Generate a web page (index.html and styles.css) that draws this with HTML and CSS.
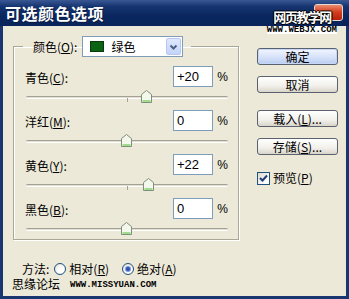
FILE: index.html
```html
<!DOCTYPE html>
<html lang="zh-CN">
<head>
    <meta charset="UTF-8">
    <title>可选颜色选项</title>
    <link rel="stylesheet" href="styles.css">
</head>
<body>
<div class="window">
    <div class="titlebar">
        <span class="title">可选颜色选项</span>
        <span class="close-btn"></span>
    </div>
    <div class="watermark">
        <span class="wm-cn">网页教学网</span>
        <span class="wm-url">WWW.WEBJX.COM</span>
    </div>

    <div class="dialog-body">
        <div class="left-col">
            <fieldset class="group">
                <legend class="group-legend">
                    <span class="legend-label">颜色(<u>O</u>):</span>
                    <div class="select">
                        <span class="swatch"></span>
                        <span class="select-text">绿色</span>
                        <span class="select-arrow">
                            <svg width="13" height="17" viewBox="0 0 13 17"><path d="M3.5 6.5 L6.5 9.5 L9.5 6.5" fill="none" stroke="#4d6185" stroke-width="2"/></svg>
                        </span>
                    </div>
                </legend>

                <div class="slider-row">
                    <div class="field-line">
                        <span class="field-label">青色(<u>C</u>):</span>
                        <input class="field-input" type="text" value="+20" readonly>
                        <span class="pct">%</span>
                    </div>
                    <div class="slider">
                        <span class="track"></span>
                        <span class="tick"></span>
                        <span class="thumb" style="left: 116px;">
                            <svg width="11" height="13" viewBox="0 0 11 13"><path d="M0.5 4.5 L5.5 0.5 L10.5 4.5 V12.5 H0.5 Z" fill="#f3f7ec" stroke="#7f8f7b"/><path d="M1.5 11.5 H9.5 M1.5 10.5 H9.5" stroke="#9fdc8c"/></svg>
                        </span>
                    </div>
                </div>

                <div class="slider-row">
                    <div class="field-line">
                        <span class="field-label">洋红(<u>M</u>):</span>
                        <input class="field-input" type="text" value="0" readonly>
                        <span class="pct">%</span>
                    </div>
                    <div class="slider">
                        <span class="track"></span>
                        <span class="tick"></span>
                        <span class="thumb" style="left: 96px;">
                            <svg width="11" height="13" viewBox="0 0 11 13"><path d="M0.5 4.5 L5.5 0.5 L10.5 4.5 V12.5 H0.5 Z" fill="#f3f7ec" stroke="#7f8f7b"/><path d="M1.5 11.5 H9.5 M1.5 10.5 H9.5" stroke="#9fdc8c"/></svg>
                        </span>
                    </div>
                </div>

                <div class="slider-row">
                    <div class="field-line">
                        <span class="field-label">黄色(<u>Y</u>):</span>
                        <input class="field-input" type="text" value="+22" readonly>
                        <span class="pct">%</span>
                    </div>
                    <div class="slider">
                        <span class="track"></span>
                        <span class="tick"></span>
                        <span class="thumb" style="left: 118px;">
                            <svg width="11" height="13" viewBox="0 0 11 13"><path d="M0.5 4.5 L5.5 0.5 L10.5 4.5 V12.5 H0.5 Z" fill="#f3f7ec" stroke="#7f8f7b"/><path d="M1.5 11.5 H9.5 M1.5 10.5 H9.5" stroke="#9fdc8c"/></svg>
                        </span>
                    </div>
                </div>

                <div class="slider-row">
                    <div class="field-line">
                        <span class="field-label">黑色(<u>B</u>):</span>
                        <input class="field-input" type="text" value="0" readonly>
                        <span class="pct">%</span>
                    </div>
                    <div class="slider">
                        <span class="track"></span>
                        <span class="tick"></span>
                        <span class="thumb" style="left: 96px;">
                            <svg width="11" height="13" viewBox="0 0 11 13"><path d="M0.5 4.5 L5.5 0.5 L10.5 4.5 V12.5 H0.5 Z" fill="#f3f7ec" stroke="#7f8f7b"/><path d="M1.5 11.5 H9.5 M1.5 10.5 H9.5" stroke="#9fdc8c"/></svg>
                        </span>
                    </div>
                </div>
            </fieldset>

            <div class="method">
                <span class="method-label">方法:</span>
                <span class="radio"></span>
                <span class="radio-text">相对(<u>R</u>)</span>
                <span class="radio checked"></span>
                <span class="radio-text">绝对(<u>A</u>)</span>
            </div>

            <div class="footer">
                <span class="footer-cn">思缘论坛</span>
                <span class="footer-url">WWW.MISSYUAN.COM</span>
            </div>
        </div>

        <div class="right-col">
            <button class="btn btn-default">确定</button>
            <button class="btn btn-cancel">取消</button>
            <button class="btn btn-load">载入(<u>L</u>)...</button>
            <button class="btn btn-save">存储(<u>S</u>)...</button>
            <div class="preview">
                <span class="checkbox">
                    <svg width="11" height="11" viewBox="0 0 11 11"><path d="M2 5 L4.5 7.5 L9 2.5" fill="none" stroke="#22397a" stroke-width="2"/></svg>
                </span>
                <span class="preview-text">预览(<u>P</u>)</span>
            </div>
        </div>
    </div>
</div>
</body>
</html>
```

FILE: styles.css
```css
/* 可选颜色选项 dialog */
* {
    box-sizing: border-box;
}

body {
    margin: 0;
    font-family: "Noto Sans CJK SC", sans-serif;
    font-size: 12px;
    line-height: 14px;
    color: #000;
}

.window {
    position: relative;
    width: 349px;
    height: 299px;
    background: #ece9d8;
    overflow: hidden;
}

.titlebar {
    position: relative;
    height: 26px;
    padding-left: 5px;
    display: flex;
    align-items: center;
    background: linear-gradient(to bottom, #3a5994 0%, #16346f 25%, #0a2760 60%, #08245a 100%);
}

.title {
    color: #fff;
    font-size: 16px;
    line-height: 18px;
    font-weight: bold;
    letter-spacing: 0.5px;
    text-shadow: 1px 1px 0 #0a1a40;
}

.close-btn {
    position: absolute;
    right: 6px;
    top: 4px;
    width: 29px;
    height: 17px;
    border: 1px solid #e8d8d0;
    border-radius: 3px;
    background: linear-gradient(to bottom, #ec8c70 0%, #d44020 45%, #b8200c 100%);
}

.watermark {
    position: absolute;
    right: 12px;
    top: 8px;
    display: flex;
    flex-direction: column;
    align-items: center;
}

.wm-cn {
    color: #fff;
    font-size: 13px;
    line-height: 18px;
    font-weight: bold;
    letter-spacing: -1.5px;
    text-shadow: 1px 0 0 #000, -1px 0 0 #000, 0 1px 0 #000, 0 -1px 0 #000;
}

.wm-url {
    font-family: "Liberation Mono", monospace;
    font-size: 9px;
    line-height: 8px;
    font-weight: bold;
    color: #000;
    background: #fff;
}

.dialog-body {
    display: flex;
    height: 273px;
    padding-top: 10px;
    border: 3px solid #1a3670;
    border-top: 0;
}

.left-col {
    width: 242px;
    padding-left: 10px;
}

.group {
    width: 226px;
    min-width: 0;
    margin: 0;
    padding: 9px 10px 3px 11px;
    border: 1px solid #a9a797;
    box-shadow: inset 1px 1px 0 #fff, 1px 1px 0 #fff;
}

.group-legend {
    display: flex;
    align-items: center;
    gap: 5px;
    margin-left: -2px;
    padding: 0 8px 0 10px;
}

.select {
    display: flex;
    align-items: center;
    width: 101px;
    height: 21px;
    padding: 1px 1px 1px 7px;
    border: 1px solid #7f9db9;
    background: #fff;
}

.swatch {
    width: 14px;
    height: 11px;
    background: #0a6414;
    border: 1px solid #0a3a0a;
}

.select-text {
    margin-left: 7px;
    flex: 1;
}

.select-arrow {
    display: flex;
    width: 15px;
    height: 17px;
    border: 1px solid #b6c8f2;
    border-radius: 2px;
    background: linear-gradient(to bottom, #dfe8fd 0%, #c3d3fa 100%);
}

.slider-row {
    margin-bottom: 6px;
}

.slider-row:last-child {
    margin-bottom: 0;
}

.field-line {
    display: flex;
    align-items: center;
    height: 21px;
}

.field-label {
    flex: 1;
    padding-top: 2px;
}

.field-input {
    width: 40px;
    height: 21px;
    margin: 0;
    padding: 0 3px;
    border: 1px solid #7f9db9;
    background: #fff;
    font-family: "Liberation Sans", sans-serif;
    font-size: 13px;
    color: #000;
}

.pct {
    width: 15px;
    text-align: right;
    font-family: "Liberation Sans", sans-serif;
    font-size: 12px;
}

.slider {
    position: relative;
    height: 14px;
    margin-top: 3px;
}

.track {
    position: absolute;
    left: 1px;
    right: 0;
    top: 6px;
    height: 3px;
    border-radius: 2px;
    border-top: 1px solid #a3a196;
    border-bottom: 1px solid #fff;
    background: #e2dfd2;
}

.tick {
    position: absolute;
    left: 102px;
    top: 8px;
    width: 1px;
    height: 4px;
    background: #a3a196;
}

.thumb {
    position: absolute;
    top: 0;
    display: flex;
    width: 11px;
    height: 13px;
}

.method {
    display: flex;
    align-items: center;
    height: 14px;
    margin-top: 22px;
    padding-left: 9px;
}

.method-label {
    margin-right: 5px;
}

.radio {
    position: relative;
    width: 12px;
    height: 12px;
    border: 1px solid #1c5180;
    border-radius: 50%;
    background: radial-gradient(circle at 60% 60%, #fff 30%, #dcd9cc 100%);
}

.radio.checked::after {
    content: "";
    position: absolute;
    left: 3px;
    top: 3px;
    width: 4px;
    height: 4px;
    border-radius: 50%;
    background: #2e4fb8;
    box-shadow: 0 0 0 1px #7e95dc;
}

.radio-text {
    margin-left: 3px;
    margin-right: 13px;
}

.footer {
    display: flex;
    align-items: center;
    margin-top: 1px;
    margin-left: -1px;
    height: 14px;
}

.footer-cn {
    font-size: 12px;
}

.footer-url {
    margin-left: 10px;
    font-family: "Liberation Mono", monospace;
    font-size: 9px;
    font-weight: bold;
    padding-top: 2px;
}

.right-col {
    display: flex;
    flex-direction: column;
    padding-left: 12px;
    padding-top: 12px;
}

.btn {
    width: 81px;
    height: 17px;
    margin: 0;
    padding: 0;
    border: 1px solid #5a6270;
    border-radius: 3px;
    background: linear-gradient(to bottom, #ffffff 0%, #f1f0ea 60%, #d9d5ca 100%);
    font-family: "Noto Sans CJK SC", sans-serif;
    font-size: 12px;
    line-height: 14px;
    color: #000;
}

.btn-default {
    background: linear-gradient(to bottom, #f2f6ff 0%, #d4e0f8 60%, #b8cbef 100%);
    box-shadow: inset 0 0 0 1px #c6d6f6;
}

.btn-cancel {
    margin-top: 11px;
}

.btn-load {
    margin-top: 17px;
}

.btn-save {
    margin-top: 11px;
}

.preview {
    display: flex;
    align-items: center;
    margin-top: 16px;
}

.checkbox {
    display: flex;
    align-items: center;
    justify-content: center;
    width: 13px;
    height: 13px;
    border: 1px solid #1c5180;
    background: linear-gradient(135deg, #dcd9cc 0%, #fff 80%);
}

.preview-text {
    margin-left: 3px;
}
```
